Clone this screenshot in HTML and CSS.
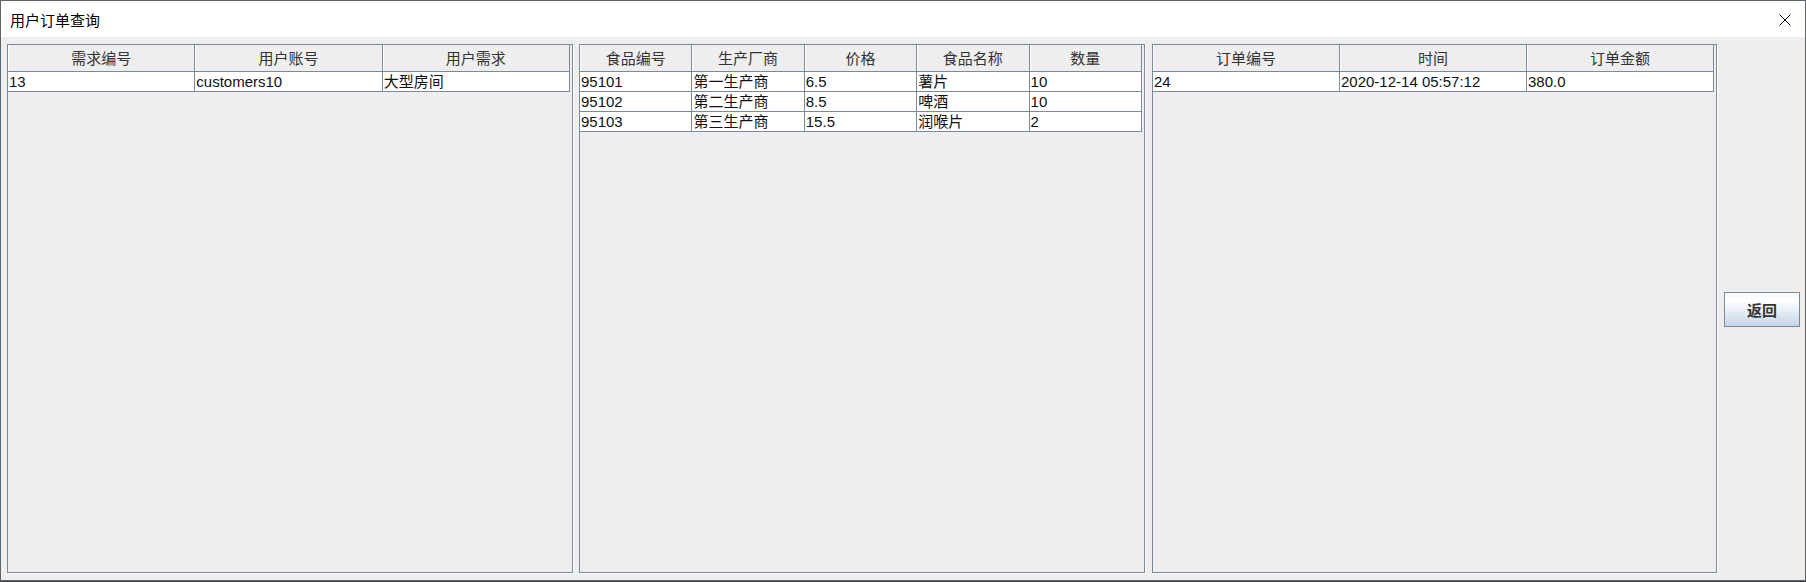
FILE: index.html
```html
<!DOCTYPE html>
<html lang="zh-CN">
<head>
<meta charset="utf-8">
<title>用户订单查询</title>
<link rel="stylesheet" href="styles.css">
</head>
<body>
<div class="window">
  <div class="titlebar">
    <span class="title">用户订单查询</span>
    <svg class="close" width="12" height="12" viewBox="0 0 12 12"><path d="M0.5 0.5 L11.5 11.5 M11.5 0.5 L0.5 11.5" stroke="#000" stroke-width="1" fill="none"/></svg>
  </div>
  <div class="content">
    <div class="pane">
      <table class="grid">
        <thead><tr><th>需求编号</th><th>用户账号</th><th>用户需求</th></tr></thead>
        <tbody><tr><td>13</td><td>customers10</td><td>大型房间</td></tr></tbody>
      </table>
    </div>
    <div class="pane pane-mid">
      <table class="grid">
        <thead><tr><th>食品编号</th><th>生产厂商</th><th>价格</th><th>食品名称</th><th>数量</th></tr></thead>
        <tbody>
          <tr><td>95101</td><td>第一生产商</td><td>6.5</td><td>薯片</td><td>10</td></tr>
          <tr><td>95102</td><td>第二生产商</td><td>8.5</td><td>啤酒</td><td>10</td></tr>
          <tr><td>95103</td><td>第三生产商</td><td>15.5</td><td>润喉片</td><td>2</td></tr>
        </tbody>
      </table>
    </div>
    <div class="pane pane-last">
      <table class="grid">
        <thead><tr><th>订单编号</th><th>时间</th><th>订单金额</th></tr></thead>
        <tbody><tr><td>24</td><td>2020-12-14 05:57:12</td><td>380.0</td></tr></tbody>
      </table>
    </div>
    <div class="side">
      <button class="btn">返回</button>
    </div>
  </div>
</div>
</body>
</html>
```
FILE: styles.css
```css
html, body {
  margin: 0;
  padding: 0;
  background: #3a3f44;
}
body {
  width: 1806px;
  height: 582px;
  overflow: hidden;
  font-family: "Liberation Sans", "Noto Sans CJK SC", sans-serif;
}
.window {
  box-sizing: border-box;
  width: 1806px;
  height: 581px;
  border: 1px solid #5f6468;
  background: #eeeeee;
  display: flex;
  flex-direction: column;
}
.titlebar {
  height: 36px;
  background: #ffffff;
  display: flex;
  align-items: center;
  justify-content: space-between;
  padding: 0 14px 0 9px;
  flex: none;
}
.title {
  font-family: "Noto Sans CJK SC", sans-serif;
  font-size: 15px;
  color: #000;
  line-height: 36px;
  padding-top: 1px;
}
.close {
  display: block;
  margin-top: 2px;
}
.content {
  flex: 1;
  display: flex;
  padding: 7px 5px 7px 6px;
}
.pane {
  box-sizing: border-box;
  width: 566px;
  flex: none;
  border: 1px solid #7a8a99;
  box-shadow: 1px 1px 0 #ffffff;
  background: #eeeeee;
}
.pane-mid {
  margin-left: 6px;
}
.pane-last {
  width: 565px;
  margin-left: 7px;
}
.grid {
  width: calc(100% - 2px);
  table-layout: fixed;
  border-collapse: separate;
  border-spacing: 0;
  font-size: 15px;
}
.grid th {
  height: 26px;
  padding: 0;
  font-weight: normal;
  color: #333;
  text-align: center;
  background: #eeeeee;
  border-right: 1px solid #7a8a99;
  border-bottom: 1px solid #7a8a99;
  box-shadow: inset 1px 0 0 #ffffff;
  line-height: 26px;
  font-family: "Noto Sans CJK SC", sans-serif;
}
.grid td {
  height: 19px;
  padding: 0 1px;
  line-height: 19px;
  color: #111;
  background: #ffffff;
  border-right: 1px solid #7a8a99;
  border-bottom: 1px solid #7a8a99;
  white-space: nowrap;
  overflow: hidden;
  font-family: "Liberation Sans", "Noto Sans CJK SC", sans-serif;
}
.side {
  flex: 1;
  display: flex;
  align-items: center;
  margin-left: 7px;
}
.btn {
  box-sizing: border-box;
  width: 76px;
  height: 35px;
  margin-top: 1px;
  border: 1px solid #7a8a99;
  border-radius: 0;
  background: linear-gradient(#f4f8fc 0%, #ffffff 22%, #e6eef7 55%, #c4d5e8 100%);
  font-family: "Noto Sans CJK SC", sans-serif;
  font-weight: bold;
  font-size: 15px;
  color: #333;
  padding: 0;
}
```
